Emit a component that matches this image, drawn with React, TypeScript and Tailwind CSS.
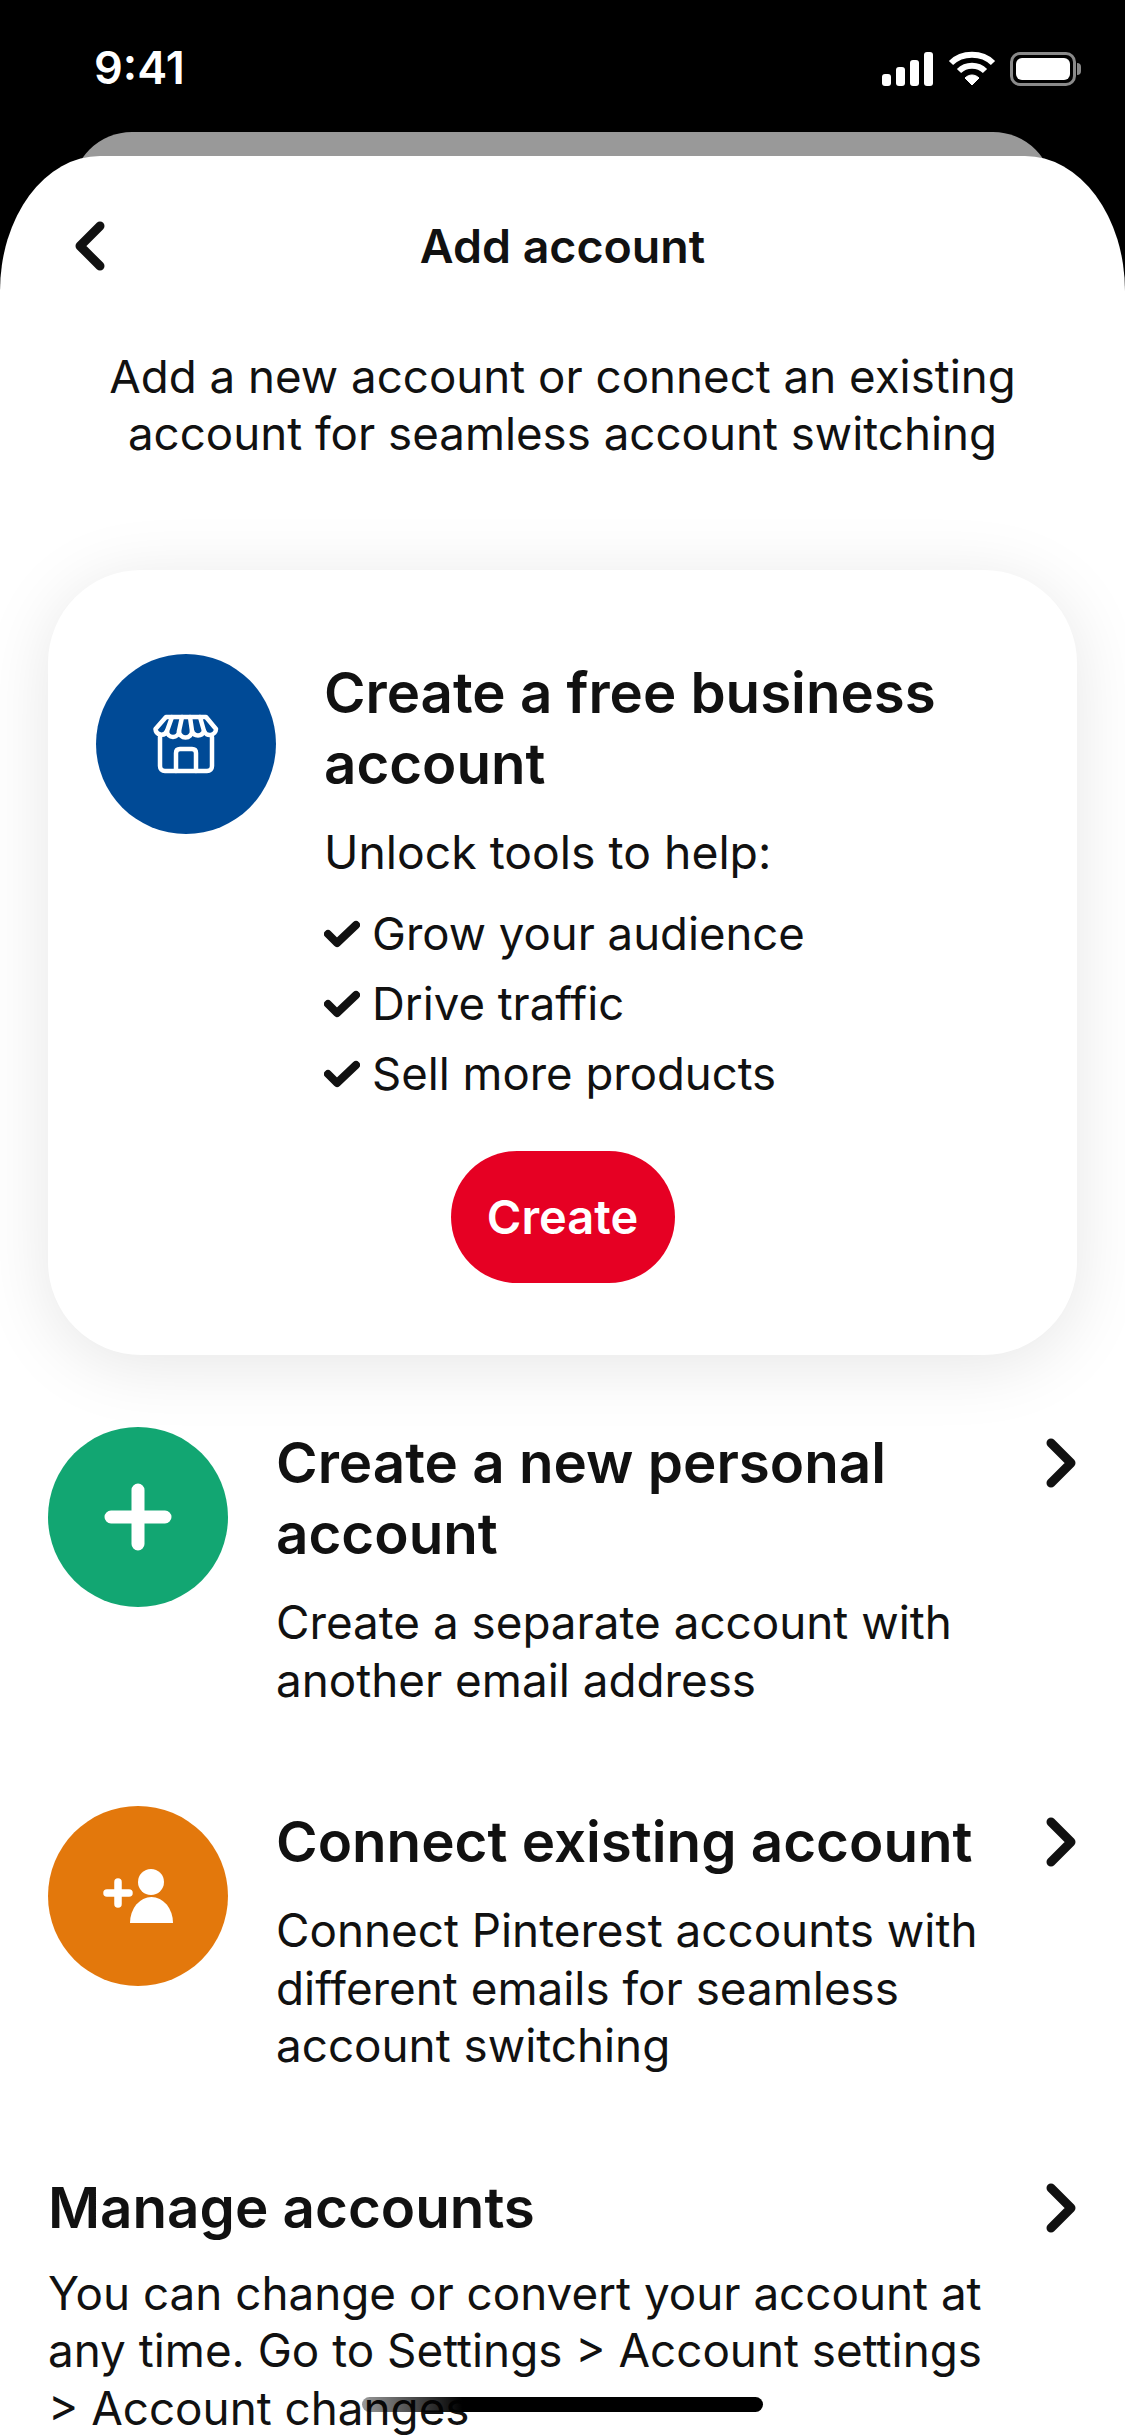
const font = { fontFamily: "Inter, 'Liberation Sans', sans-serif" };

function Chevron({ left = false }: { left?: boolean }) {
  return (
    <svg width="32" height="50" viewBox="0 0 32 50" fill="none" className="shrink-0">
      <path
        d={left ? "M26 5 L6 25 L26 45" : "M6 5 L26 25 L6 45"}
        stroke="#111111"
        strokeWidth="9"
        strokeLinecap="round"
        strokeLinejoin="round"
      />
    </svg>
  );
}

function StatusIcons() {
  return (
    <div className="flex items-center gap-[14px]">
      <svg width="52" height="34" viewBox="0 0 52 34" fill="white">
        <rect x="0" y="22" width="9" height="12" rx="3" />
        <rect x="14" y="15" width="9" height="19" rx="3" />
        <rect x="28" y="8" width="9" height="26" rx="3" />
        <rect x="42" y="0" width="9" height="34" rx="3" />
      </svg>
      <svg width="48" height="36" viewBox="0 0 48 36" fill="none" stroke="white" strokeWidth="6">
        <path d="M3 12 C14 1 34 1 45 12" />
        <path d="M11 20 C18 13 30 13 37 20" />
        <path d="M24 34 L17 27 C21 23 27 23 31 27 Z" fill="white" strokeWidth="1" />
      </svg>
      <div className="flex items-center">
        <div className="w-[66px] h-[34px] rounded-[10px] border-[3px] border-[#8a8a8a] p-[3px]">
          <div className="w-full h-full rounded-[6px] bg-white" />
        </div>
        <div className="w-[4px] h-[12px] rounded-r-full bg-[#8a8a8a] ml-[1px]" />
      </div>
    </div>
  );
}

function StoreIcon() {
  return (
    <svg width="66" height="60" viewBox="0 0 66 60" fill="none" stroke="white" strokeWidth="4.5" strokeLinejoin="round" strokeLinecap="round">
      <path d="M13 3 H53 L63 15 A6.2 6.2 0 0 1 51 17 A6.3 6.3 0 0 1 39 17 A6.5 6.5 0 0 1 26 17 A6 6 0 0 1 14 17 A6 6 0 0 1 2.5 15 Z" />
      <path d="M19 3 L14 17 M29 3 L26 17 M37 3 L39 17 M47 3 L51 17" />
      <path d="M7 23 V52 C7 55 9 57 12 57 H54 C57 57 59 55 59 52 V23" />
      <path d="M23 57 V39 C23 36 25 35 27 35 H39 C41 35 43 36 43 39 V57" />
    </svg>
  );
}

function PlusIcon() {
  return (
    <svg width="68" height="68" viewBox="0 0 68 68" stroke="white" strokeWidth="13" strokeLinecap="round">
      <path d="M34 7 V61 M7 34 H61" />
    </svg>
  );
}

function PersonPlusIcon() {
  return (
    <svg width="70" height="54" viewBox="0 0 70 54" fill="white">
      <circle cx="48" cy="13" r="13" />
      <path d="M27 54 A21.5 26 0 0 1 70 54 Z" />
      <path d="M4 24 H26 M15 13 V35" stroke="white" strokeWidth="7.5" strokeLinecap="round" />
    </svg>
  );
}

function Check({ label }: { label: string }) {
  return (
    <div className="flex items-center h-[70px]">
      <svg width="36" height="28" viewBox="0 0 36 28" fill="none" className="mr-[12px] shrink-0">
        <path d="M4 14 L13 23 L32 5" stroke="#111111" strokeWidth="8" strokeLinecap="round" strokeLinejoin="round" />
      </svg>
      <span>{label}</span>
    </div>
  );
}

type Row = { color: string; icon: React.ReactNode; title: string[]; text: string[] };

const rows: Row[] = [
  {
    color: "bg-[#12a672]",
    icon: <PlusIcon />,
    title: ["Create a new personal", "account"],
    text: ["Create a separate account with", "another email address"],
  },
  {
    color: "bg-[#e3780c]",
    icon: <PersonPlusIcon />,
    title: ["Connect existing account"],
    text: ["Connect Pinterest accounts with", "different emails for seamless", "account switching"],
  },
];

export default function App() {
  return (
    <div style={font} className="relative w-[1125px] h-[2436px] overflow-hidden bg-black text-[#111111]">
      {/* status bar */}
      <div className="h-[132px] flex items-start justify-between pl-[94px] pr-[44px] pt-[42px]">
        <span className="text-white text-[45px] leading-[52px] font-semibold">9:41</span>
        <div className="pt-[9px]">
          <StatusIcons />
        </div>
      </div>

      {/* sheet behind */}
      <div className="h-[60px] mx-[72px] rounded-t-[80px] bg-[#999999]" />

      {/* sheet */}
      <div className="-mt-[36px] h-[2280px] bg-white rounded-tl-[100px_135px] rounded-tr-[100px_135px]">
        <header className="relative flex items-center justify-center pt-[58px] h-[122px]">
          <div className="absolute left-[74px] top-[65px]">
            <Chevron left />
          </div>
          <h1 className="text-[46.5px] leading-[64px] font-semibold">Add account</h1>
        </header>

        <p className="mt-[70px] text-center text-[45.7px] leading-[57px]">
          Add a new account or connect an existing
          <br />
          account for seamless account switching
        </p>

        <section className="mt-[108px] mx-[48px] h-[785px] rounded-[93px] bg-white shadow-[0_10px_70px_rgba(0,0,0,0.1)] pl-[48px] pr-[40px] pt-[84px]">
          <div className="flex gap-[48px]">
            <div className="w-[180px] h-[180px] rounded-full bg-[#004a96] flex items-center justify-center shrink-0">
              <StoreIcon />
            </div>
            <div className="mt-[3px]">
              <h2 className="text-[56.4px] leading-[71px] font-semibold">
                Create a free business
                <br />
                account
              </h2>
              <p className="mt-[25px] text-[46.3px] leading-[57px]">Unlock tools to help:</p>
              <div className="mt-[18px] text-[45.5px]">
                <Check label="Grow your audience" />
                <Check label="Drive traffic" />
                <Check label="Sell more products" />
              </div>
            </div>
          </div>
          <div className="flex justify-center mt-[42px] pr-[8px]">
            <button className="w-[224px] h-[132px] rounded-full bg-[#e60023] text-white text-[47px] font-semibold">
              Create
            </button>
          </div>
        </section>

        <div className="mt-[72px] px-[48px] flex flex-col gap-[97px]">
          {rows.map((row) => (
            <div key={row.title[0]} className="flex">
              <div className={`w-[180px] h-[180px] rounded-full ${row.color} flex items-center justify-center shrink-0`}>
                {row.icon}
              </div>
              <div className="ml-[48px] flex-1">
                <h2 className="text-[56.5px] leading-[71px] font-semibold">
                  {row.title.map((line) => (
                    <span key={line} className="block whitespace-nowrap">{line}</span>
                  ))}
                </h2>
                <p className="mt-[25px] text-[45.8px] leading-[57.5px]">
                  {row.text.map((line) => (
                    <span key={line} className="block whitespace-nowrap">{line}</span>
                  ))}
                </p>
              </div>
              <div className="pt-[11px]">
                <Chevron />
              </div>
            </div>
          ))}
        </div>

        <div className="mt-[97px] px-[48px]">
          <div className="flex justify-between items-start">
            <h2 className="text-[56.5px] leading-[71px] font-semibold">Manage accounts</h2>
            <div className="pt-[11px]">
              <Chevron />
            </div>
          </div>
          <p className="mt-[22px] text-[45.8px] leading-[57.5px] whitespace-nowrap">
            You can change or convert your account at
            <br />
            any time. Go to Settings &gt; Account settings
            <br />
            &gt; Account changes
          </p>
        </div>
      </div>

      {/* home indicator */}
      <div className="absolute left-[362px] top-[2397px] w-[401px] h-[15px] rounded-full bg-gradient-to-r from-black/40 via-black via-25% to-black" />
    </div>
  );
}
